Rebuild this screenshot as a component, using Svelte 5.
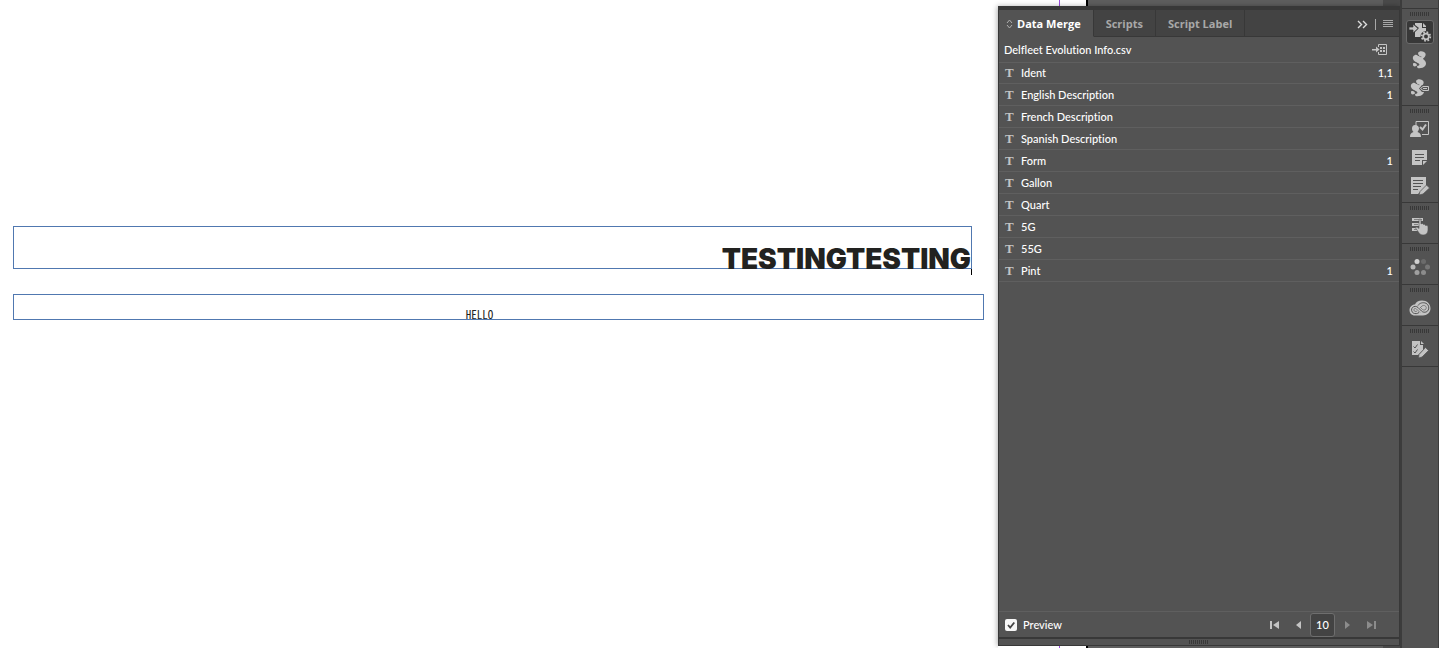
<script>
  const tabs = ["Data Merge", "Scripts", "Script Label"];
  const fields = [
    { name: "Ident", count: "1,1" },
    { name: "English Description", count: "1" },
    { name: "French Description", count: "" },
    { name: "Spanish Description", count: "" },
    { name: "Form", count: "1" },
    { name: "Gallon", count: "" },
    { name: "Quart", count: "" },
    { name: "5G", count: "" },
    { name: "55G", count: "" },
    { name: "Pint", count: "1" },
  ];
  const dock = [
    ["Data Merge", "Scripts", "Script Label"],
    ["Assignments", "Notes", "Track Changes"],
    ["Hyperlinks"],
    ["Background Tasks"],
    ["CC Libraries"],
    ["Preflight"],
  ];

  let activeTab = $state("Data Merge");
  let activeDock = $state("Data Merge");
  let preview = $state(true);
  let record = $state("10");
</script>

{#snippet pasteboard()}
  <div class="pasteboard">
    <span class="margin"></span>
    <span class="edge"></span>
    <span class="outside"></span>
    <span class="scroll"></span>
  </div>
{/snippet}

{#snippet script()}
  <path
    d="M8 3C9 1 12 1 14 2C16 3 16 5 15 6.500C14 8 13 8 13 9C16 11 17 14 15 16C13.500 18 10 18.500 7.500 18L7 16C9 16 10 15 9 13.500L4.500 11C2 9 2.500 6 5 5C7 4.500 8 5.500 9 7.500L12 7C10 6.500 8 5.500 8 3Z"
    fill="#c4c4c4"
  />
  <path d="M5 6.500L9 6L13 9L13 14L9 13.500L4.500 11Z" fill="#c4c4c4" />
  <path d="M3 13.500C5 12.500 7 13.500 7 15.500L5 16.500C3 16.500 3 15.500 3 13.500Z" fill="#c4c4c4" />
{/snippet}

{#snippet dockIcon(name)}
  <svg width="24" height="20" viewBox="0 0 24 20" aria-hidden="true">
    {#if name === "Data Merge"}
      <path d="M7 1H14V6H18V11L14 13V15H7V10L11 6L7 3Z" fill="#c4c4c4" />
      <path d="M15 1L18 4V5H15Z" fill="#c4c4c4" />
      <path d="M1 5H5V2L10 6.5L5 11V8H1Z" fill="#c4c4c4" stroke="#383838" stroke-width=".7" />
      <circle cx="18" cy="14.500" r="5.500" fill="#383838" />
      <circle cx="18" cy="14.500" r="4.300" fill="none" stroke="#c4c4c4" stroke-width="1.800" stroke-dasharray="1.700 1.677" />
      <circle cx="18" cy="14.500" r="2.800" fill="none" stroke="#c4c4c4" stroke-width="1.700" />
    {:else if name === "Scripts"}
      <g transform="translate(2 0)">{@render script()}</g>
    {:else if name === "Script Label"}
      {@render script()}
      <path d="M11 10.500L14 7H22V14H14Z" fill="#535353" />
      <path d="M12.500 10.500L15 8.500H20.500V12.500H15Z" fill="#535353" stroke="#c4c4c4" />
      <path d="M15 10.500H19" stroke="#c4c4c4" />
    {:else if name === "Assignments"}
      <path d="M8 7V2.500H20.500V15.500H14" fill="none" stroke="#c4c4c4" />
      <path d="M12 8L14.500 10.500L18 5.500" fill="none" stroke="#c4c4c4" stroke-width="2" />
      <path d="M7 6C9.500 6 11 7.500 11 9.500C11 11 10 12 9.500 13C12 14 13 15 13 18H2C2 15 3 14 5.500 13C4.500 12 4 11 4 9.500C4 7.500 5 6 7 6Z" fill="#c4c4c4" />
    {:else if name === "Notes"}
      <path d="M4 3H19V13H14V18H4Z" fill="#c4c4c4" />
      <path d="M15 14H19L15 18Z" fill="#c4c4c4" />
      <path d="M7 7.500H16M7 10.500H16M7 13.500H12" stroke="#535353" />
    {:else if name === "Track Changes"}
      <path d="M3 2H18V11L10 19H3Z" fill="#c4c4c4" />
      <path d="M5 5.500H15M5 8.500H15M5 11.500H13M5 14.500H10" stroke="#535353" />
      <path d="M18.500 10L21.500 13L15 19L11 20L12 16.500Z" fill="#c4c4c4" stroke="#535353" stroke-width=".7" />
    {:else if name === "Hyperlinks"}
      <path d="M4 3.500H15M4 8.500H11M4 13.500H10" stroke="#c4c4c4" stroke-width="3" />
      <path d="M6 3.500H14M6 8.500H10M6 13.500H9" stroke="#535353" stroke-width=".6" />
      <path d="M11 4C11 2.500 13 2.500 13 4V8C14 7 15 7.500 15.500 8.500C16.500 8 17 8.500 17.500 9.500C19 9 20 10 20 11V14C20 17 18 19 15 19C12 19 11 17 9 14L7.500 12C8 10.500 9.500 11 11 12.500Z" fill="#c4c4c4" stroke="#535353" stroke-width=".6" />
    {:else if name === "Background Tasks"}
      <circle cx="9" cy="4.500" r="2.500" fill="#d0d0d0" />
      <circle cx="15.500" cy="4.500" r="2.500" fill="#6b6b6b" />
      <circle cx="19.500" cy="10" r="2.500" fill="#777777" />
      <circle cx="15.500" cy="15.500" r="2.500" fill="#8c8c8c" />
      <circle cx="9" cy="15.500" r="2.500" fill="#a0a0a0" />
      <circle cx="5" cy="10" r="2.500" fill="#b8b8b8" />
    {:else if name === "CC Libraries"}
      <path d="M7 17.500C3.500 17.500 1.500 15 1.500 12C1.500 9 4 6.500 7 6.500C8 4 10.500 2.500 14 2.500C19 2.500 22.500 6 22.500 10.500C22.500 14.500 19 17.500 15 17.500Z" fill="#c4c4c4" />
      <path d="M11 14.500C9.500 15.800 7 16 5.300 15C3.300 13.800 3 11 4.500 9.500C6 8 8.500 8 10 9.500L13.500 13C15.500 15 19 14.500 20.300 12C21.500 9.500 20.500 6.500 18 5.300C15 4 11.500 5 10 7.500" fill="none" stroke="#535353" />
      <path d="M9 13C8 14 6 13.500 5.800 12C5.700 10.500 7.500 10 8.500 11L12 14.500M12 10L14 8C15.500 6.800 18 7.500 18.300 9.500C18.500 11.800 16 12.800 14.500 11.500L12.500 9.500" fill="none" stroke="#6b6b6b" stroke-width=".8" />
    {:else}
      <path d="M4 2H12V6H15V11L10 16H4Z" fill="#c4c4c4" />
      <path d="M13 2L16 5H13Z" fill="#c4c4c4" />
      <path d="M5.500 7.500L7 9L9.500 5.500M5.500 12.500L7 14L9.500 10.500" fill="none" stroke="#535353" />
      <path d="M17.500 8.500L20.500 11.500L14 18L10.500 19L11 15.500Z" fill="#c4c4c4" stroke="#535353" stroke-width=".7" />
    {/if}
  </svg>
{/snippet}

<div class="app">
  <main class="canvas">
    <div class="frame heading"><span>TESTINGTESTING</span><i class="caret"></i></div>
    <div class="frame body">HELLO</div>
  </main>

  <div class="float">
    {@render pasteboard()}
    <section class="panel">
      <header class="tabs">
        {#each tabs as tab, i}
          <button class="tab" class:active={activeTab === tab} onclick={() => (activeTab = tab)}>
            {#if i === 0}
              <svg width="7" height="10" viewBox="0 0 7 10" aria-hidden="true">
                <path d="M1 4L3.500 1L6 4M1 6L3.500 9L6 6" fill="none" stroke="#b0b0b0" />
              </svg>
            {/if}
            {tab}
          </button>
        {/each}
        <div class="tools">
          <button aria-label="Collapse panel">
            <svg width="11" height="9" viewBox="0 0 11 9">
              <path d="M1 1L4.500 4.500L1 8M6 1L9.500 4.500L6 8" fill="none" stroke="#dddddd" stroke-width="1.400" />
            </svg>
          </button>
          <span class="divider"></span>
          <button aria-label="Panel menu">
            <svg width="10" height="8" viewBox="0 0 10 8">
              <path d="M0 .5H10M0 2.500H10M0 4.500H10M0 6.500H10" stroke="#a8a8a8" />
            </svg>
          </button>
        </div>
      </header>

      <div class="source">
        <span>Delfleet Evolution Info.csv</span>
        <button aria-label="Insert field placeholders">
          <svg width="16" height="11" viewBox="0 0 16 11">
            <path d="M0 5H4V2.500L7.500 5.500L4 8.500V6.500H0Z" fill="#c4c4c4" />
            <path d="M6.500 3V.5H14.500V10.500H6.500V8" fill="none" stroke="#c4c4c4" />
            <path d="M8 3H10V5H8ZM11 3H13V5H11ZM8 6H10V8H8ZM11 6H13V8H11Z" fill="#c4c4c4" />
          </svg>
        </button>
      </div>

      <ul class="fields">
        {#each fields as field}
          <li>
            <span class="type">T</span>
            <span class="name">{field.name}</span>
            <span>{field.count}</span>
          </li>
        {/each}
      </ul>

      <footer>
        <label>
          <input type="checkbox" bind:checked={preview} />
          <svg class="box" width="12" height="12" viewBox="0 0 12 12" aria-hidden="true">
            <rect width="12" height="12" rx="2" fill="#f7f7f7" />
            {#if preview}
              <path d="M3 6L5.200 8.500L9.300 3.500" fill="none" stroke="#444444" stroke-width="1.800" />
            {/if}
          </svg>
          Preview
        </label>
        <div class="pager">
          <button aria-label="First record">
            <svg width="9" height="8" viewBox="0 0 9 8"><path d="M0 0H2V8H0ZM9 0V8L3 4Z" /></svg>
          </button>
          <button aria-label="Previous record">
            <svg width="5" height="8" viewBox="0 0 5 8"><path d="M5 0V8L0 4Z" /></svg>
          </button>
          <input type="text" aria-label="Record" bind:value={record} />
          <button class="off" aria-label="Next record">
            <svg width="5" height="8" viewBox="0 0 5 8"><path d="M0 0V8L5 4Z" /></svg>
          </button>
          <button class="off" aria-label="Last record">
            <svg width="9" height="8" viewBox="0 0 9 8"><path d="M7 0H9V8H7ZM0 0V8L6 4Z" /></svg>
          </button>
        </div>
      </footer>
      <div class="resize"><span class="grip"></span></div>
    </section>
    {@render pasteboard()}
  </div>

  <nav class="dock">
    {#each dock as group}
      <div class="group">
        <span class="grip"></span>
        {#each group as item}
          <button class:active={activeDock === item} aria-label={item} onclick={() => (activeDock = item)}>
            {@render dockIcon(item)}
          </button>
        {/each}
      </div>
    {/each}
  </nav>
</div>

<style>
  :global(body) {
    margin: 0;
    background: #fff;
  }
  .app {
    display: grid;
    grid-template-columns: 1fr 402px 39px;
    min-height: 100vh;
    font: 500 11px/16px Lato, sans-serif;
    font-variant-ligatures: none;
    color: #fff;
    overflow: hidden;
  }
  button {
    display: flex;
    align-items: center;
    justify-content: center;
    margin: 0;
    padding: 0;
    border: 0;
    background: none;
    color: inherit;
    font: inherit;
  }

  /* document */
  .canvas {
    padding: 226px 14px 0 13px;
  }
  .frame {
    display: flex;
    align-items: flex-end;
    box-sizing: border-box;
    border: 1px solid #5078b0;
    color: #222220;
  }
  .heading {
    position: relative;
    justify-content: flex-end;
    height: 43px;
    margin: 0 12px 25px 0;
    font: 900 28px/18px Inter, sans-serif;
  }
  .caret {
    position: absolute;
    right: -1px;
    bottom: -7px;
    width: 1px;
    height: 6px;
    background: #000;
  }
  .body {
    justify-content: center;
    height: 26px;
    padding-right: 38px;
    font: 11px/10px "Noto Sans Mono CJK JP", "Liberation Sans", sans-serif;
  }

  /* floating panel */
  .float {
    display: flex;
    flex-direction: column;
  }
  .pasteboard {
    display: flex;
    height: 6px;
    background: #5e5e5e;
  }
  .pasteboard:last-child {
    height: 2px;
  }
  .margin {
    width: 61px;
    background: #fff;
    border-right: 1px solid #9a4be0;
  }
  .edge {
    width: 26px;
    background: #fff;
    border-right: 2px solid #000;
  }
  .outside {
    flex: 1;
  }
  .scroll {
    width: 17px;
    background: #4a4a4a;
  }
  .panel {
    display: flex;
    flex: 1;
    flex-direction: column;
    border: 1px solid #383838;
    border-width: 4px 1px 1px;
    background: #535353;
    box-shadow: -1px 0 5px rgba(0, 0, 0, 0.3);
  }
  .tabs {
    display: flex;
    height: 27px;
    background: #434343;
    font: bold 11px/16px "Open Sans", sans-serif;
  }
  .tab {
    gap: 4px;
    padding: 2px 12px 0;
    border-right: 1px solid #383838;
    border-bottom: 1px solid #383838;
    color: #a8a8a8;
  }
  .tab:first-child {
    padding-left: 7px;
  }
  .tab.active {
    border-bottom-color: #535353;
    background: #535353;
    color: #fff;
  }
  .tools {
    display: flex;
    flex: 1;
    align-items: center;
    justify-content: flex-end;
    gap: 7px;
    padding: 2px 6px 0 0;
    border-bottom: 1px solid #383838;
  }
  .divider {
    width: 1px;
    height: 11px;
    background: #a8a8a8;
  }
  .source {
    display: flex;
    align-items: center;
    justify-content: space-between;
    height: 25px;
    padding: 0 11px 0 5px;
  }
  .fields {
    flex: 1;
    margin: 0;
    padding: 0;
    list-style: none;
  }
  .fields li {
    display: flex;
    align-items: center;
    box-sizing: border-box;
    height: 22px;
    padding: 0 6px;
    border-bottom: 1px solid #5f5f5f;
  }
  .fields li:first-child {
    border-top: 1px solid #5f5f5f;
  }
  .type {
    width: 16px;
    color: #c4c4c4;
    font: bold 13px/16px "Liberation Serif", serif;
  }
  .name {
    flex: 1;
  }
  footer {
    display: flex;
    align-items: center;
    justify-content: space-between;
    box-sizing: border-box;
    height: 28px;
    padding: 0 16px 0 6px;
    border-top: 1px solid #5f5f5f;
    border-bottom: 2px solid #383838;
  }
  label {
    display: flex;
    align-items: center;
    gap: 6px;
  }
  label input {
    position: absolute;
    opacity: 0;
  }
  .pager {
    display: flex;
    align-items: center;
  }
  .pager button {
    width: 24px;
    height: 24px;
    fill: #c4c4c4;
  }
  .pager .off {
    fill: #8c8c8c;
  }
  .pager input {
    box-sizing: border-box;
    width: 25px;
    height: 24px;
    padding: 0;
    border: 1px solid #6e6e6e;
    border-radius: 3px;
    background: #434343;
    color: #fff;
    font: 500 11px/16px Lato, sans-serif;
    text-align: center;
  }
  .resize {
    display: flex;
    align-items: center;
    justify-content: center;
    height: 6px;
  }
  .grip {
    width: 20px;
    height: 4px;
    background: repeating-linear-gradient(90deg, #383838 0 1px, #535353 1px 2px);
  }

  /* icon dock */
  .dock {
    box-sizing: border-box;
    padding-top: 8px;
    border-left: 2px solid #3c3c3c;
    border-right: 1px solid #3c3c3c;
    background: #535353;
  }
  .group {
    display: flex;
    flex-direction: column;
    align-items: center;
    padding: 3px 0;
    border-top: 1px solid #383838;
  }
  .group:last-child {
    border-bottom: 1px solid #383838;
  }
  .group .grip {
    margin-bottom: 2px;
  }
  .group button {
    box-sizing: border-box;
    width: 28px;
    height: 24px;
    margin: 2px 0;
    border: 1px solid transparent;
    border-radius: 3px;
  }
  .group button.active {
    border-color: #6b6b6b;
    background: #383838;
  }
</style>
